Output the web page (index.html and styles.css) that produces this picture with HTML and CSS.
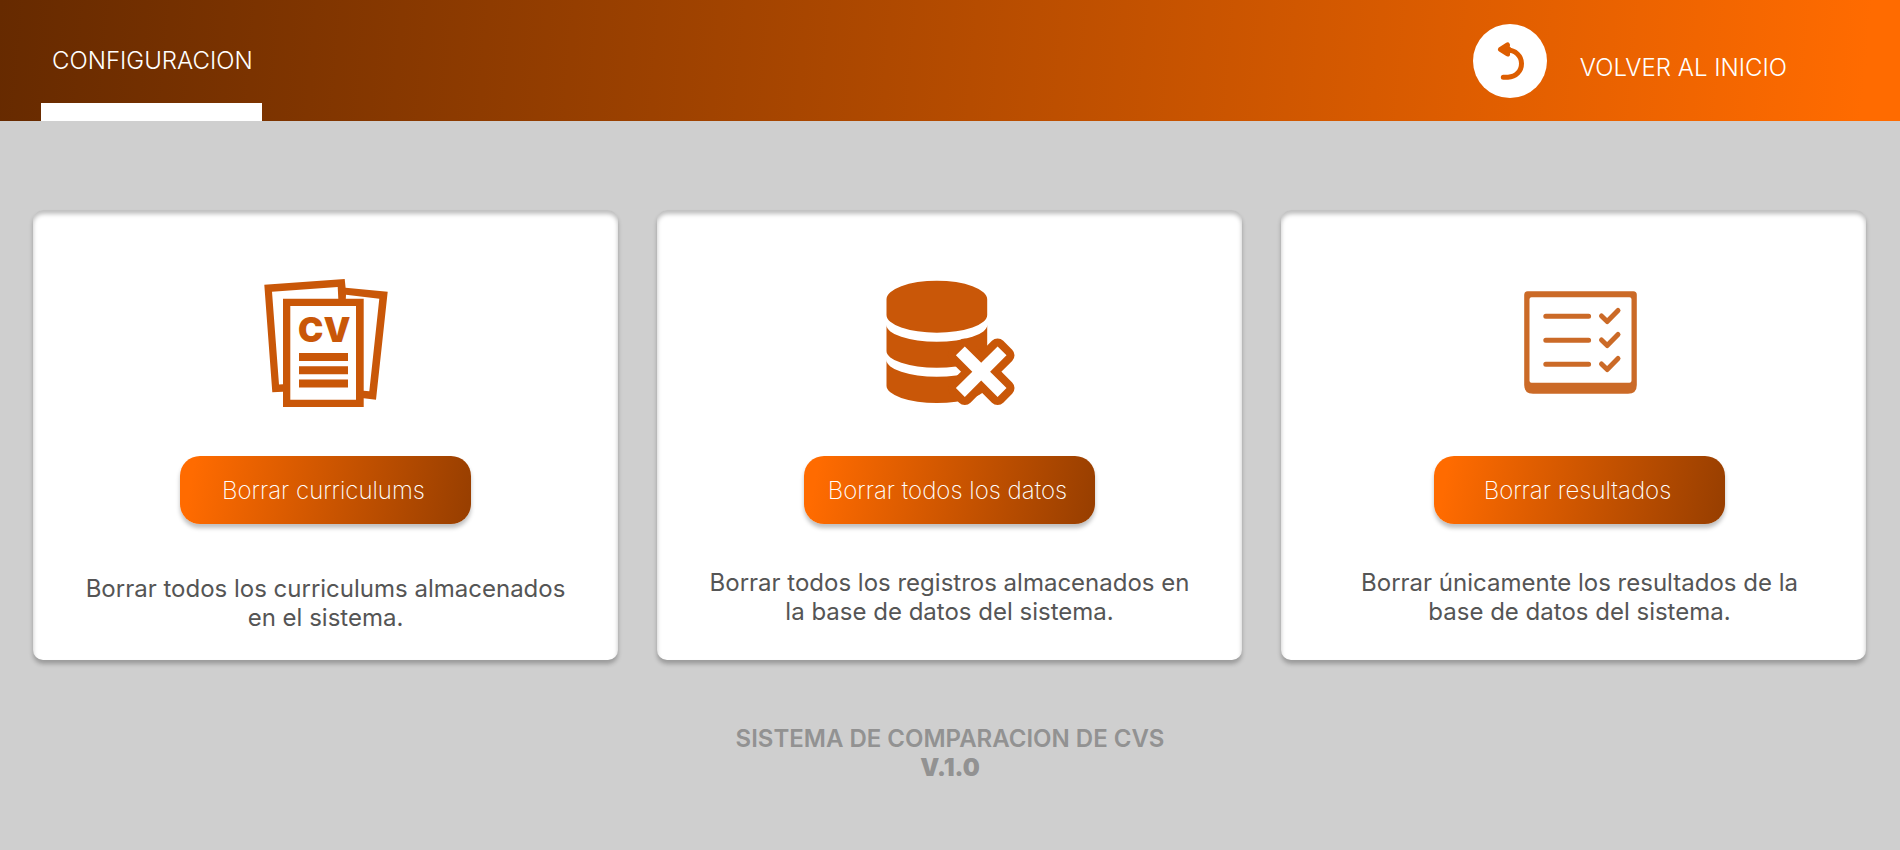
FILE: index.html
```html
<!DOCTYPE html>
<html lang="es">
<head>
<meta charset="utf-8">
<meta name="viewport" content="width=device-width, initial-scale=1">
<title>Configuracion</title>
<link rel="stylesheet" href="styles.css">
</head>
<body>
<header class="header">
  <h1 class="tab">CONFIGURACION</h1>
  <a class="back" href="#">
    <span class="back-circle">
      <svg class="back-icon" viewBox="0 0 74 74" aria-hidden="true">
        <path class="back-curve" d="M34 26C42.500 26 48.500 32 48.500 39.500C48.500 47 43 53 35 53.200H30.300"/>
        <path class="back-head" d="M27.500 25.300L34.500 21L34.200 23.500L36 25.500L34.500 27.500L34.600 30Z"/>
      </svg>
    </span>
    <span class="back-label">VOLVER AL INICIO</span>
  </a>
</header>
<main class="cards">
  <section class="card">
    <svg class="card-icon" viewBox="0 0 128 128" aria-hidden="true">
      <path class="solid" d="M2.300 5.700L82.700 0L83.600 8.700L125.700 12.700L114 120.700L101.700 119.200V128H21V112.700L10.300 113.300ZM10 12.700L17 105.600L21 105.200V19.700H76.300L75.700 8ZM84 15.700L83.800 19.700H101.700V111.700L107.300 112.300L117.300 19.700ZM28.300 27V120.700H94V27Z"/>
      <path class="solid" d="M37 74H86V82H37ZM37 87.300H86V95.300H37ZM37 100.600H86V108.600H37Z"/>
      <text class="icon-text" x="36" y="63">CV</text>
    </svg>
    <button class="action" type="button">Borrar curriculums</button>
    <p class="text text-low">Borrar todos los curriculums almacenados en el sistema.</p>
  </section>
  <section class="card">
    <svg class="card-icon" viewBox="0 0 128 128" aria-hidden="true">
      <path class="solid" d="M.5 20.300A50.350 18.600 0 0 1 101.200 20.300V36A50.350 17.700 0 0 1 .5 36Z"/>
      <path class="solid" d="M.5 46A50.350 16.700 0 0 0 101.200 46V72A50.350 16.700 0 0 1 .5 72Z"/>
      <path class="solid" d="M.5 81A50.350 16.700 0 0 0 101.200 81V106.700A50.350 17.300 0 0 1 .5 106.700Z"/>
      <path class="cross" transform="translate(95.200 92.700) rotate(45)" d="M-29.500-6.300H-6.300V-29.500H6.300V-6.300H29.500V6.300H6.300V29.500H-6.300V6.300H-29.500Z"/>
    </svg>
    <button class="action" type="button">Borrar todos los datos</button>
    <p class="text">Borrar todos los registros almacenados en la base de datos del sistema.</p>
  </section>
  <section class="card card-shifted">
    <svg class="card-icon" viewBox="0 0 128 128" aria-hidden="true">
      <path class="sheet" d="M11.700 12.300H117.300Q120.800 12.300 120.800 15.800V106Q120.800 114.700 112 114.700H17Q8.200 114.700 8.200 106V15.800Q8.200 12.300 11.700 12.300ZM15.500 18.300Q13.500 18.300 13.500 20.300V101.700Q13.500 103.700 15.500 103.700H113.500Q115.500 103.700 115.500 101.700V20.300Q115.500 18.300 113.500 18.300Z"/>
      <path class="list" d="M29.800 37.300H72.600M29.800 61.300H72.600M29.800 85.300H72.600M85.500 37L91.200 42.500L102 31.500M85.500 61L91.200 66.500L102 55.500M85.500 85L91.200 90.500L102 79.500"/>
    </svg>
    <button class="action" type="button">Borrar resultados</button>
    <p class="text">Borrar únicamente los resultados de la base de datos del sistema.</p>
  </section>
</main>
<footer class="footer">
  <p class="product">SISTEMA DE COMPARACION DE CVS</p>
  <p class="version">V.1.0</p>
</footer>
</body>
</html>
```

FILE: styles.css
```css
* { box-sizing: border-box; }
body {
  margin: 0;
  background: #cfcfcf;
  font-family: Inter, "Liberation Sans", sans-serif;
  font-size: 24px;
  line-height: 29px;
}
.header {
  display: flex;
  justify-content: space-between;
  align-items: center;
  padding: 0 113px 0 41px;
  background: linear-gradient(95deg, #662a00, #ff6b00 98%);
  color: #fff;
  font-weight: 300;
}
.tab {
  margin: 0;
  padding: 46px 9px 28px 11px;
  border-bottom: 18px solid #fff;
  font-size: 24px;
  font-weight: 300;
}
.back {
  display: flex;
  align-items: center;
  gap: 33px;
  color: inherit;
  text-decoration: none;
}
.back-circle {
  width: 74px;
  height: 74px;
  border-radius: 50%;
  background: #fff;
}
.back-icon {
  display: block;
  width: 100%;
  stroke: #dd5d00;
  stroke-linecap: round;
  stroke-linejoin: round;
}
.back-curve { fill: none; stroke-width: 5; }
.back-head { fill: #dd5d00; stroke-width: 5; }
.back-label { padding-top: 14px; }
.cards {
  display: grid;
  grid-template-columns: repeat(3, 1fr);
  gap: 39px;
  padding: 89px 34px 0 33px;
}
.card {
  display: flex;
  flex-direction: column;
  align-items: center;
  padding: 69px 20px 28px;
  border-radius: 10px;
  background: #fff;
  box-shadow: 0 4px 4px rgba(0, 0, 0, .25), inset 0 4px 4px rgba(0, 0, 0, .25);
}
.card-shifted { padding-left: 32px; }
.card-icon { width: 128px; height: 128px; overflow: visible; }
.solid { fill: #c95708; fill-rule: evenodd; }
.icon-text { fill: #c95708; font-size: 34px; font-weight: 900; }
.cross {
  fill: #fff;
  stroke: #c95708;
  stroke-width: 16;
  stroke-linejoin: round;
  paint-order: stroke;
}
.sheet { fill: #cb6a27; fill-rule: evenodd; }
.list {
  fill: none;
  stroke: #cb6a27;
  stroke-width: 5;
  stroke-linecap: round;
  stroke-linejoin: round;
}
.action {
  width: 291px;
  max-width: 100%;
  height: 68px;
  margin: 49px 0 44px;
  padding: 0 4px 0 0;
  border: 0;
  border-radius: 20px;
  background: linear-gradient(100deg, #ff6b00 5%, #993f00 98%);
  box-shadow: 0 4px 4px rgba(0, 0, 0, .25);
  color: #fff;
  font: 200 24px/29px Inter, "Liberation Sans", sans-serif;
  cursor: pointer;
}
.text {
  max-width: 490px;
  margin: 0;
  color: #555;
  font-weight: 400;
  text-align: center;
}
.text-low { padding-top: 6px; }
.footer {
  padding: 64px 20px;
  color: #929292;
  text-align: center;
}
.product, .version { margin: 0; }
.product { font-weight: 600; }
.version { font-weight: 900; }
```
